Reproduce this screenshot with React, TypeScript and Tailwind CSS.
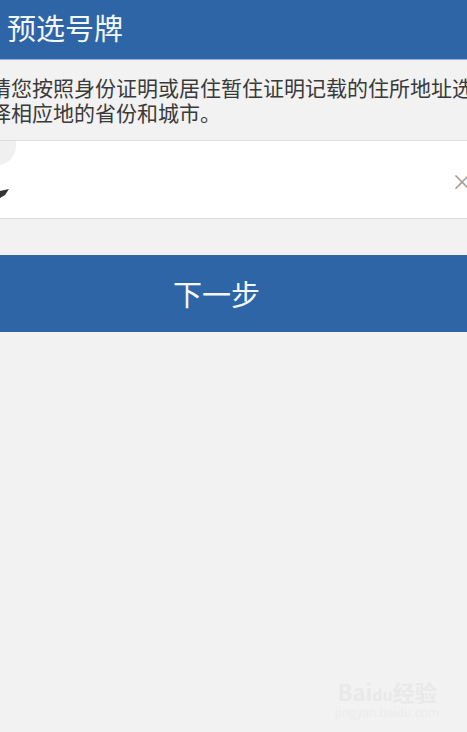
import React from "react";

export default function App() {
  const font = { fontFamily: '"Noto Sans CJK SC", "Noto Sans", sans-serif' };
  return (
    <div className="w-[467px] h-[732px] bg-[#f2f2f2] overflow-hidden relative" style={font}>
      <div className="h-[60px] bg-[#2d65a7] border-b border-[#8fb0d8] flex items-center pl-[7px] pb-[4px]">
        <span className="text-[#f4f8fc] text-[29px] leading-none">预选号牌</span>
      </div>
      <div className="ml-[-10px] w-[490px] pt-[15px] text-[21px] leading-[25px] text-[#3a3a3a] whitespace-nowrap">
        请您按照身份证明或居住暂住证明记载的住所地址选
        <br />
        择相应地的省份和城市。
      </div>
      <div className="mt-[15px] h-[79px] bg-white border-y border-[#dcdcdc] flex items-stretch justify-between">
        <div className="relative w-[16px]">
          <div className="absolute left-[-22px] top-0 w-[38px] h-[24px] rounded-b-full bg-[#f0f0f0]"></div>
          <svg className="absolute left-0 top-[48px]" width="10" height="10" viewBox="0 0 10 10">
            <path d="M0 2 L9 0 L5 6 L0 9 Z" fill="#333" />
          </svg>
        </div>
        <div className="flex items-center mr-[-6px]">
          <span className="text-[22px] text-[#a0a0a0] leading-none">×</span>
        </div>
      </div>
      <div className="mt-[36px] h-[77px] bg-[#2d65a7] flex items-center justify-center pr-[34px]">
        <span className="text-[#f4f8fc] text-[29px] leading-none">下一步</span>
      </div>
      <div className="absolute right-[28px] bottom-[14px] flex flex-col items-center">
        <div className="flex items-baseline text-[#e9e9e9] font-bold leading-none">
          <span className="text-[22px]">Bai</span>
          <span className="text-[16px]">du</span>
          <span className="text-[22px]">经验</span>
        </div>
        <div className="text-[#ececec] text-[12px] leading-none mt-[4px]">jingyan.baidu.com</div>
      </div>
    </div>
  );
}
